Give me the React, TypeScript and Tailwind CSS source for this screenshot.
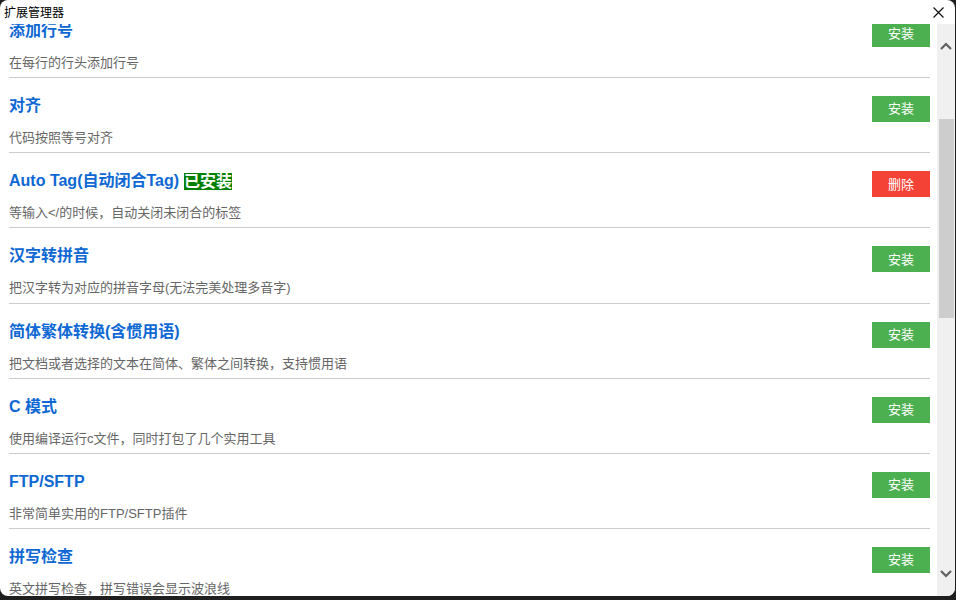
import React from 'react';

interface Plugin {
  name: string;
  desc: string;
  installed?: boolean;
}

const plugins: Plugin[] = [
  { name: '添加行号', desc: '在每行的行头添加行号' },
  { name: '对齐', desc: '代码按照等号对齐' },
  { name: 'Auto Tag(自动闭合Tag)', desc: '等输入</的时候，自动关闭未闭合的标签', installed: true },
  { name: '汉字转拼音', desc: '把汉字转为对应的拼音字母(无法完美处理多音字)' },
  { name: '简体繁体转换(含惯用语)', desc: '把文档或者选择的文本在简体、繁体之间转换，支持惯用语' },
  { name: 'C 模式', desc: '使用编译运行c文件，同时打包了几个实用工具' },
  { name: 'FTP/SFTP', desc: '非常简单实用的FTP/SFTP插件' },
  { name: '拼写检查', desc: '英文拼写检查，拼写错误会显示波浪线' },
];

const font = { fontFamily: '"Liberation Sans", "Noto Sans CJK SC", sans-serif' };

const PluginRow: React.FC<{ plugin: Plugin }> = ({ plugin }) => (
  <div className="flex h-[75.17px] shrink-0 items-start justify-between border-b border-[#cccccc] pt-[16px]">
    <div className="flex flex-col">
      <div className="flex h-6 items-center text-[16px] font-bold text-[#0e68d3]">
        <span>{plugin.name}</span>
        {plugin.installed && (
          <span className="ml-[5px] bg-[#008000] text-[16px] leading-[17px] text-white">已安装</span>
        )}
      </div>
      <div className="mt-[10px] text-[13px] leading-5 text-[#666666]">{plugin.desc}</div>
    </div>
    <button
      className={
        'mt-[2px] h-[26px] w-[58px] text-[13px] text-white ' +
        (plugin.installed ? 'bg-[#f44336]' : 'bg-[#4caf50]')
      }
    >
      {plugin.installed ? '删除' : '安装'}
    </button>
  </div>
);

export default function App() {
  return (
    <div className="h-[600px] w-[956px] bg-[#1f1f1f]" style={font}>
      <div className="flex h-[596px] w-[955px] flex-col overflow-hidden rounded-lg bg-white">
        <div className="flex h-6 shrink-0 items-center justify-between pl-[4px] pr-[11px] pt-[1px]">
          <span className="text-[12px] text-black">扩展管理器</span>
          <svg width="11" height="11" viewBox="0 0 11 11" className="mb-[1px]">
            <path d="M0.5 0.5 L10.5 10.5 M10.5 0.5 L0.5 10.5" stroke="#111" strokeWidth="1.2" />
          </svg>
        </div>
        <div className="flex min-h-0 flex-1">
          <div className="min-w-0 flex-1 overflow-hidden pl-[9px] pr-[7px]">
            <div className="-mt-[21px] flex flex-col">
              {plugins.map((p) => (
                <PluginRow key={p.name} plugin={p} />
              ))}
            </div>
          </div>
          <div className="flex w-[18px] shrink-0 flex-col items-center bg-[#f0f0f0]">
            <div className="flex h-[28px] w-full items-end justify-center pb-[2px]">
              <svg width="12" height="8" viewBox="0 0 12 8">
                <path d="M1 7 L6 2 L11 7" fill="none" stroke="#606060" strokeWidth="2.2" />
              </svg>
            </div>
            <div className="mt-[67px] h-[199px] w-[15px] bg-[#cdcdcd]" />
            <div className="flex-1" />
            <div className="flex h-[30px] w-full items-start justify-center pt-[4px]">
              <svg width="12" height="8" viewBox="0 0 12 8">
                <path d="M1 1 L6 6 L11 1" fill="none" stroke="#606060" strokeWidth="2.2" />
              </svg>
            </div>
          </div>
        </div>
      </div>
    </div>
  );
}
